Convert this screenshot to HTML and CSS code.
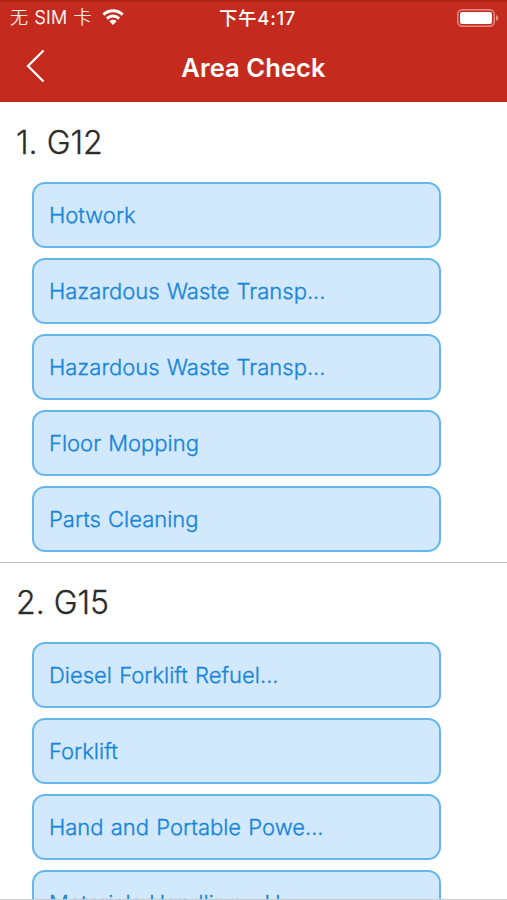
FILE: index.html
```html
<!DOCTYPE html>
<html lang="zh">
<head>
<meta charset="utf-8">
<title>Area Check</title>
<link rel="stylesheet" href="styles.css">
</head>
<body>
<header class="top">
  <div class="status">
    <div class="carrier"><span class="carrier-name">无 SIM 卡</span>
      <svg class="wifi" viewBox="0 0 22 16"><path d="M0.3 4.6a15.5 15.5 0 0 1 21.4 0l-2 2.2a12.4 12.4 0 0 0-17.4 0zM3.9 8.5a10.2 10.2 0 0 1 14.2 0l-2 2.2a7.2 7.2 0 0 0-10.2 0zM7.4 12.3a5.2 5.2 0 0 1 7.2 0L11 16z"/></svg>
    </div>
    <div class="time">下午4:17</div>
    <svg class="battery" viewBox="0 0 42 18"><rect x=".75" y=".75" width="36.5" height="16.5" rx="4.5" class="shell"/><rect x="3" y="3" width="32" height="12" rx="2"/><path d="M39 6q2.5 1 2.5 3T39 12z" class="cap"/></svg>
  </div>
  <div class="nav">
    <svg class="back" viewBox="0 0 20 34"><path d="M18.5 1.500 3 17l15.500 15.500"/></svg>
    <h1 class="title">Area Check</h1>
  </div>
</header>
<main class="content">
  <section class="group">
    <h2 class="heading">1. G12</h2>
    <ul class="list">
      <li class="item">Hotwork</li>
      <li class="item">Hazardous Waste Transp...</li>
      <li class="item">Hazardous Waste Transp...</li>
      <li class="item">Floor Mopping</li>
      <li class="item">Parts Cleaning</li>
    </ul>
  </section>
  <section class="group">
    <h2 class="heading">2. G15</h2>
    <ul class="list">
      <li class="item">Diesel Forklift Refuel...</li>
      <li class="item">Forklift</li>
      <li class="item">Hand and Portable Powe...</li>
      <li class="item">Materials Handling - U...</li>
    </ul>
  </section>
</main>
</body>
</html>
```
FILE: styles.css
```css
* { box-sizing: border-box; margin: 0; padding: 0; }
body { height: 900px; overflow: hidden; display: flex; flex-direction: column; background: #fff; font-family: Inter, "Noto Sans CJK SC", sans-serif; }
.top { flex: none; height: 102px; background: #c42b1e; border-top: 2px solid #ab2517; color: #fff; }
.status { height: 32px; padding: 0 8px 0 10px; display: grid; grid-template-columns: 1fr auto 1fr; align-items: center; }
.carrier { display: flex; align-items: center; gap: 10px; font-size: 18px; font-weight: 300; line-height: 32px; letter-spacing: .2px; word-spacing: 1px; white-space: nowrap; -webkit-text-stroke: .2px; }
.wifi { width: 22px; height: 16px; margin-top: -2px; fill: #fff; }
.time { font-size: 18.5px; font-weight: 500; line-height: 32px; letter-spacing: .7px; white-space: nowrap; padding-left: 6px; }
.battery { width: 42px; height: 18px; fill: #fff; justify-self: end; margin-top: -1px; }
.shell { fill: none; stroke: #e28e86; stroke-width: 1.5; }
.cap { fill: #e28e86; }
.nav { height: 66px; display: grid; grid-template-columns: 60px 1fr 60px; align-items: center; }
.back { width: 20px; height: 34px; margin: -5px 0 0 25px; fill: none; stroke: #fff; stroke-width: 2.3; }
.title { font-size: 25.500px; font-weight: 600; line-height: 68px; letter-spacing: .1px; text-align: center; }
.content { flex: 1; min-height: 0; overflow: hidden; padding-top: 1px; border-bottom: 1px solid #c8cccf; }
.group { border-bottom: 1px solid #bfc1bf; padding-bottom: 10px; }
.heading { height: 79px; padding-left: 16px; font-size: 32px; font-weight: 300; line-height: 79px; color: #2b2b2b; -webkit-text-stroke: .3px; }
.list { list-style: none; padding-left: 32px; display: grid; gap: 10px; }
.item { width: 409px; height: 66px; border: 2px solid #66b6ee; border-radius: 13px; background: #d2e8fc; color: #1585da; padding-left: 15px; font-size: 22px; font-weight: 300; line-height: 62px; letter-spacing: 0; word-spacing: 1px; white-space: nowrap; -webkit-text-stroke: .3px; }
```
